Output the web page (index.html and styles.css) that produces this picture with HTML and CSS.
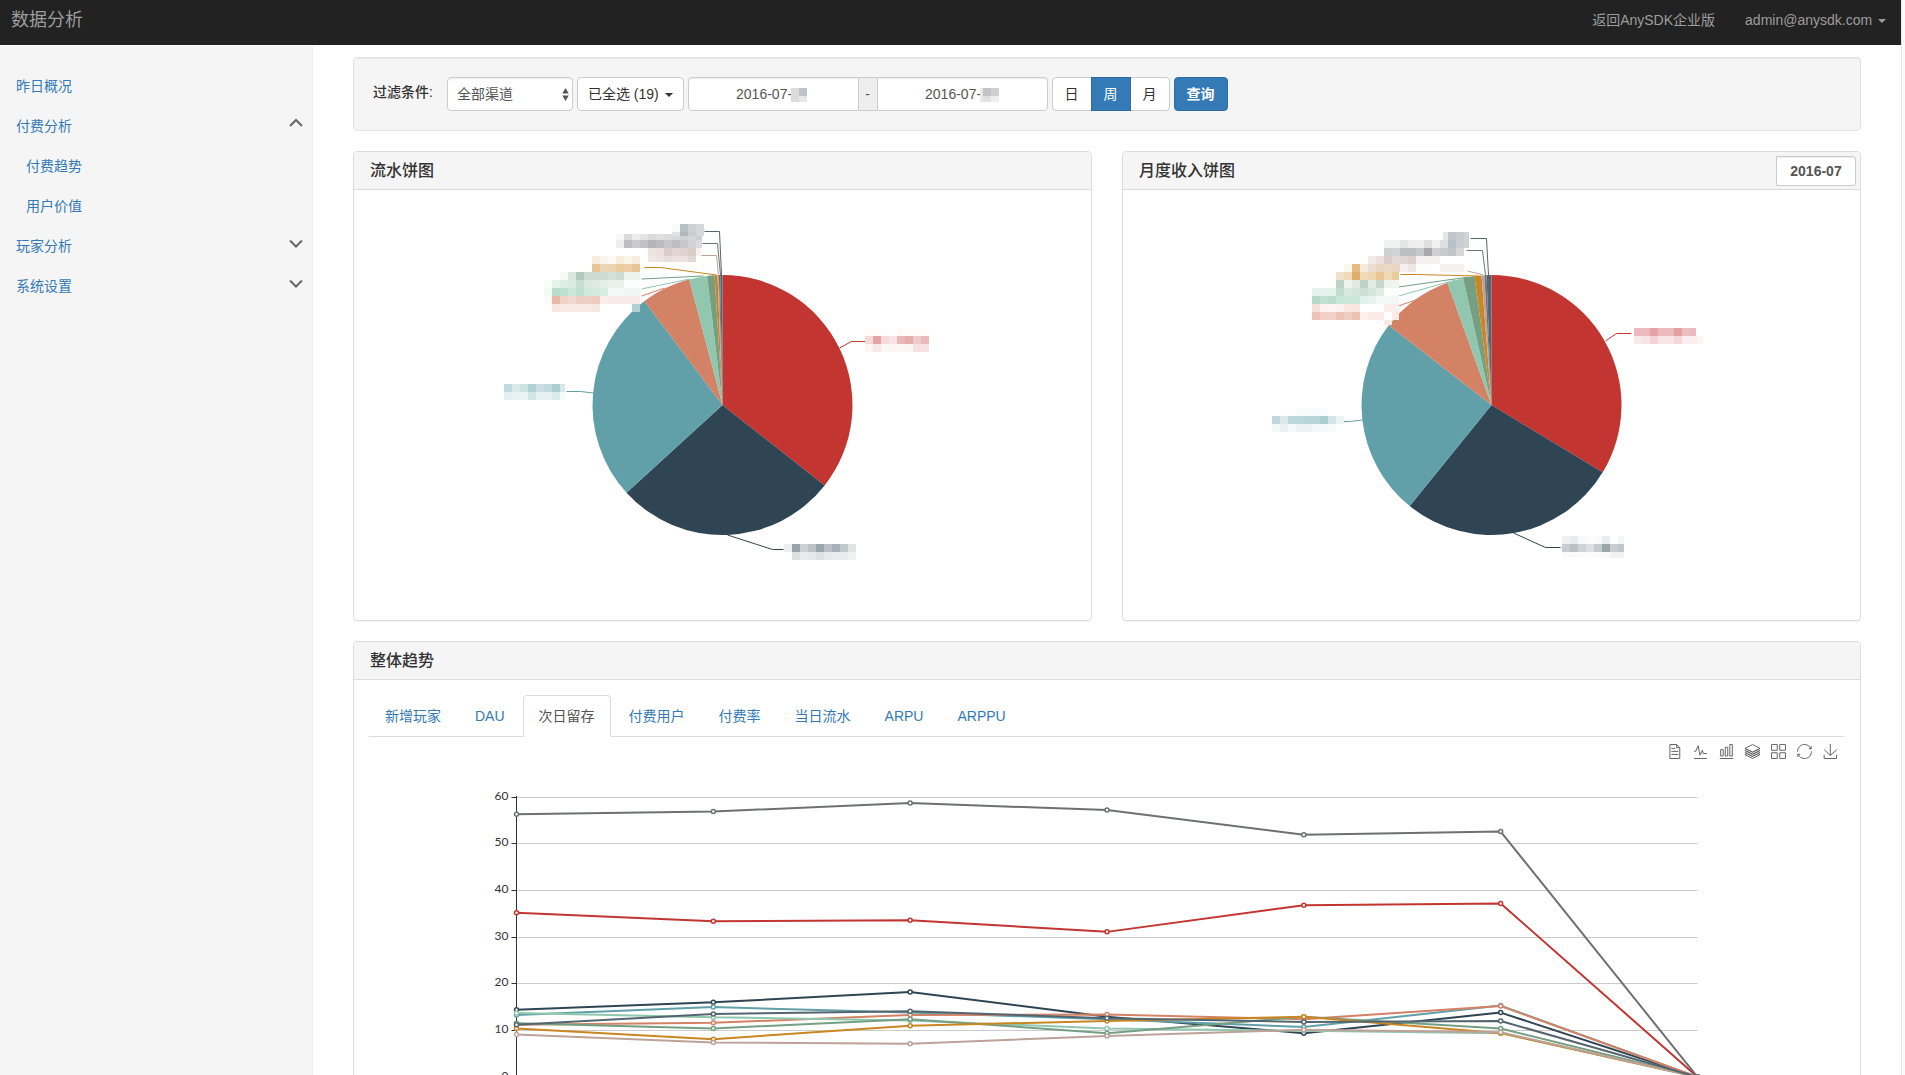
FILE: index.html
```html
<!DOCTYPE html>
<html lang="zh-CN">
<head>
    <meta charset="UTF-8">
    <meta name="viewport" content="width=device-width, initial-scale=1.0">
    <title>数据分析</title>
    <link rel="stylesheet" href="styles.css">
</head>
<body>
    <div class="page">
        <header class="navbar">
            <a class="navbar-brand" href="#">数据分析</a>
            <nav class="navbar-right">
                <a href="#">返回AnySDK企业版</a>
                <a href="#">admin@anysdk.com <span class="caret"></span></a>
            </nav>
        </header>

        <div class="layout">
            <nav class="sidebar">
                <a href="#">昨日概况</a>
                <a href="#">付费分析
                    <svg class="chevron" viewBox="0 0 16 16"><path d="M2 8L8 2L14 8"/></svg>
                </a>
                <a class="sub" href="#">付费趋势</a>
                <a class="sub" href="#">用户价值</a>
                <a href="#">玩家分析
                    <svg class="chevron" viewBox="0 0 16 16"><path d="M2 2.500L8 8.500L14 2.500"/></svg>
                </a>
                <a href="#">系统设置
                    <svg class="chevron" viewBox="0 0 16 16"><path d="M2 2.500L8 8.500L14 2.500"/></svg>
                </a>
            </nav>

            <main class="content">
                <form class="well">
                    <label class="filter-label" for="channel">过滤条件:</label>
                    <div class="select-wrap">
                        <select id="channel" class="form-control">
                            <option>全部渠道</option>
                        </select>
                        <svg class="select-arrows" viewBox="0 0 7 14"><path d="M3.500 0L7 6H0zM3.500 14L0 8H7z"/></svg>
                    </div>
                    <button type="button" class="btn btn-multi">已全选 (19) <span class="caret"></span></button>
                    <div class="date-range">
                        <div class="date-field">
                            <input class="form-control" type="text" value="2016-07-" aria-label="开始日期">
                            <span class="mask mask-start"></span>
                        </div>
                        <span class="addon">-</span>
                        <div class="date-field">
                            <input class="form-control" type="text" value="2016-07-" aria-label="结束日期">
                            <span class="mask mask-end"></span>
                        </div>
                    </div>
                    <div class="btn-group">
                        <button type="button" class="btn">日</button>
                        <button type="button" class="btn btn-primary">周</button>
                        <button type="button" class="btn">月</button>
                    </div>
                    <button type="button" class="btn btn-primary btn-query">查询</button>
                </form>

                <div class="row">
                    <section class="panel">
                        <div class="panel-heading">
                            <h3>流水饼图</h3>
                        </div>
                        <div class="panel-body">
                            <svg id="flow-pie" class="chart"></svg>
                        </div>
                    </section>
                    <section class="panel">
                        <div class="panel-heading">
                            <h3>月度收入饼图</h3>
                            <input class="month-input" type="text" value="2016-07" aria-label="月份">
                        </div>
                        <div class="panel-body">
                            <svg id="month-pie" class="chart"></svg>
                        </div>
                    </section>
                </div>

                <section class="panel">
                    <div class="panel-heading">
                        <h3>整体趋势</h3>
                    </div>
                    <div class="panel-body">
                        <nav class="tabs">
                            <a href="#">新增玩家</a>
                            <a href="#">DAU</a>
                            <a class="active" href="#">次日留存</a>
                            <a href="#">付费用户</a>
                            <a href="#">付费率</a>
                            <a href="#">当日流水</a>
                            <a href="#">ARPU</a>
                            <a href="#">ARPPU</a>
                        </nav>
                        <div class="trend">
                            <svg id="trend-chart" class="chart"></svg>
                            <div class="toolbox">
                                <button type="button" aria-label="数据视图"><svg viewBox="0 0 60 60"><path d="M17.5,17.3H33M45.4,29.5h-28M11.5,2v56H51V14.8L38.4,2H11.5zM38.4,2.2v12.7H51M45.4,41.7h-28"/></svg></button>
                                <button type="button" aria-label="折线图"><svg viewBox="0 0 60 60"><path d="M4.1,28.9h7.1l9.3-22l7.4,38l9.7-19.7l3,12.8h14.9M4.1,58h51.4"/></svg></button>
                                <button type="button" aria-label="柱状图"><svg viewBox="0 0 60 60"><path d="M6.7,22.9h10V48h-10V22.9zM24.9,13h10v35h-10V13zM43.2,2h10v46h-10V2zM3.1,58h53.7"/></svg></button>
                                <button type="button" aria-label="堆叠"><svg viewBox="0 0 60 60"><path d="M8.2,38.4l-8.4,4.1l30.6,15.3L60,42.5l-8.1-4.1l-21.5,11L8.2,38.4zM51.9,30l-8.1,4.2l-13.4,6.9l-13.9-6.9L8.2,30l-8.4,4.2l8.4,4.2l22.2,11l21.5-11l8.1-4.2L51.9,30zM51.9,21.7l-8.1,4.2L35.7,30l-5.3,2.8L24.9,30l-8.4-4.1l-8.3-4.2l-8.4,4.2L8.2,30l8.3,4.2l13.9,6.9l13.4-6.9l8.1-4.2l8.1-4.1L51.9,21.7zM30.4,2.2L-0.2,17.5l8.4,4.1l8.3,4.2l8.4,4.2l5.5,2.7l5.3-2.7l8.1-4.2l8.1-4.2l8.1-4.1L30.4,2.2z"/></svg></button>
                                <button type="button" aria-label="平铺"><svg viewBox="0 0 60 60"><path d="M2.3,2.2h22.8V25H2.3V2.2zM35,2.2h22.8V25H35V2.2zM2.3,35h22.8v22.8H2.3V35zM35,35h22.8v22.8H35V35z"/></svg></button>
                                <button type="button" aria-label="还原"><svg viewBox="0 0 60 60"><path d="M47,18.9h9.8V8.7M56.3,20.1C52.1,9,40.5,0.6,26.8,2.1C12.6,3.7,1.6,16.2,2.1,30.6M13,41.1H3.1v10.2M3.7,39.9c4.2,11.1,15.8,19.5,29.5,18c14.2-1.6,25.2-14.1,24.7-28.5"/></svg></button>
                                <button type="button" aria-label="保存为图片"><svg viewBox="0 0 60 60"><path d="M4.7,22.9L29.3,45.5L54.7,23.4M4.6,43.6L4.6,58L53.8,58L53.8,43.6M29.2,45.1L29.2,0"/></svg></button>
                            </div>
                        </div>
                    </div>
                </section>
            </main>
        </div>
    </div>
    <div class="scroll-gutter"></div>

    <script src="charts.js"></script>
</body>
</html>
```

FILE: styles.css
```css
* {
    box-sizing: border-box;
}
body {
    display: flex;
    height: 100vh;
    margin: 0;
    overflow: hidden;
    font-family: "Liberation Sans", "Noto Sans CJK SC", sans-serif;
    font-size: 14px;
    line-height: 20px;
    color: #333;
    background: #fff;
}
a {
    color: #337ab7;
    text-decoration: none;
}
button, input, select {
    font: inherit;
}
.page {
    flex: 1;
    min-width: 0;
    overflow-y: auto;
    scrollbar-width: none;
}
.scroll-gutter {
    width: 4px;
    background: #fafafa;
    border-left: 1px solid #e7e7e7;
}

/* 顶部导航 */
.navbar {
    display: flex;
    justify-content: space-between;
    height: 45px;
    background: #222;
}
.navbar a {
    color: #9d9d9d;
}
.navbar-brand {
    padding: 10px 11px;
    font-size: 18px;
}
.navbar-right {
    display: flex;
}
.navbar-right a {
    padding: 10px 15px;
}
.caret {
    display: inline-block;
    margin-left: 2px;
    vertical-align: middle;
    border-top: 4px solid;
    border-right: 4px solid transparent;
    border-left: 4px solid transparent;
}

/* 侧边栏 */
.layout {
    display: flex;
    min-height: calc(100vh - 45px);
}
.sidebar {
    flex: 0 0 313px;
    margin-top: 1px;
    padding-top: 20px;
    background: #f5f5f5;
    border-right: 1px solid #eee;
}
.sidebar a {
    display: flex;
    align-items: center;
    justify-content: space-between;
    height: 40px;
    padding: 0 8px 0 16px;
}
.sidebar .sub {
    padding-left: 26px;
}
.chevron {
    width: 16px;
    height: 16px;
    fill: none;
    stroke: #666;
    stroke-width: 2;
}
.content {
    flex: 1;
    min-width: 0;
    padding: 12px 40px 0;
}

/* 过滤条件 */
.well {
    display: flex;
    gap: 4px;
    margin-bottom: 20px;
    padding: 19px;
    background: #f5f5f5;
    border: 1px solid #e3e3e3;
    border-radius: 4px;
    box-shadow: inset 0 1px 1px rgba(0,0,0,0.05);
}
.filter-label {
    padding: 5px 10px 0 0;
    font-weight: 500;
}
.form-control {
    width: 100%;
    height: 34px;
    padding: 6px 9px;
    color: #555;
    background: #fff;
    border: 1px solid #ccc;
    border-radius: 4px;
    box-shadow: inset 0 1px 1px rgba(0,0,0,0.075);
}
.select-wrap {
    position: relative;
    width: 126px;
}
.select-wrap .form-control {
    appearance: none;
}
.select-arrows {
    position: absolute;
    right: 4px;
    top: 11px;
    width: 7px;
    height: 13px;
    fill: #555;
}
.btn {
    height: 34px;
    padding: 6px 12px;
    color: #333;
    background: #fff;
    border: 1px solid #ccc;
    border-radius: 4px;
}
.btn-primary {
    color: #fff;
    background: #337ab7;
    border-color: #2e6da4;
}
.btn-multi {
    padding: 6px 10px;
}
.btn-query {
    font-weight: 700;
}
.date-range {
    display: flex;
    width: 360px;
}
.date-field {
    position: relative;
    flex: 1;
}
.date-field .form-control {
    padding-right: 27px;
    text-align: center;
}
.date-field:first-child .form-control {
    border-radius: 4px 0 0 4px;
}
.date-field:last-child .form-control {
    border-radius: 0 4px 4px 0;
}
.addon {
    width: 18px;
    padding: 6px 0;
    text-align: center;
    color: #555;
    background: #eee;
    border: solid #ccc;
    border-width: 1px 0;
}
/* 日期打码 */
.mask {
    position: absolute;
    top: 11px;
    left: calc(50% + 18px);
    width: 16px;
    height: 14px;
}
.mask-start {
    background: linear-gradient(#bfc2cb 8px, #e6e6ec 8px) right / 8px 100% no-repeat #dcdcdc;
}
.mask-end {
    width: 19px;
    background:
        linear-gradient(#cfcfd2 8px, #efefee 8px) right / 8px 100% no-repeat,
        linear-gradient(#c2c3c6 8px, #dfe1e3 8px) 3px 0 / 8px 100% no-repeat #ede8e4;
}
.btn-group {
    display: flex;
}
.btn-group .btn {
    border-radius: 0;
}
.btn-group .btn + .btn {
    margin-left: -1px;
}
.btn-group .btn:first-child {
    border-radius: 4px 0 0 4px;
}
.btn-group .btn:last-child {
    border-radius: 0 4px 4px 0;
}
.btn-group .btn-primary {
    z-index: 1;
}

/* 面板 */
.row {
    display: grid;
    grid-template-columns: 1fr 1fr;
    gap: 30px;
}
.panel {
    min-width: 0;
    margin-bottom: 20px;
    border: 1px solid #ddd;
    border-radius: 4px;
    box-shadow: 0 1px 1px rgba(0,0,0,0.05);
}
.panel-heading {
    display: flex;
    align-items: center;
    justify-content: space-between;
    height: 38px;
    padding: 0 4px 0 16px;
    background: #f5f5f5;
    border-bottom: 1px solid #ddd;
    border-radius: 3px 3px 0 0;
}
.panel-heading h3 {
    margin: 0;
    padding-top: 1px;
    font-size: 16px;
    font-weight: 500;
}
.month-input {
    width: 80px;
    height: 30px;
    padding: 1px 0 0;
    font-weight: 700;
    text-align: center;
    color: #555;
    background: #fff;
    border: 1px solid #ccc;
    border-radius: 0 3px 3px 0;
    box-shadow: inset 0 1px 1px rgba(0,0,0,0.075);
}
.panel-body {
    padding: 15px;
}

/* 标签页 */
.tabs {
    display: flex;
    gap: 2px;
    border-bottom: 1px solid #ddd;
}
.tabs a {
    margin-bottom: -1px;
    padding: 10px 15px;
    border: 1px solid transparent;
    border-radius: 4px 4px 0 0;
}
.tabs .active {
    color: #555;
    background: #fff;
    border-color: #ddd #ddd #fff;
}

/* 图表 */
.chart {
    display: block;
    width: 100%;
    height: 400px;
}
.chart .leader {
    fill: none;
    stroke-width: 1;
}
.chart .grid-line {
    stroke: #ccc;
}
.chart .axis {
    stroke: #333;
}
.chart .axis-label {
    font-family: Lato, sans-serif;
    font-size: 12px;
    fill: #333;
    text-anchor: end;
}
.chart .series {
    fill: none;
    stroke-width: 2;
    stroke-linejoin: bevel;
}
.chart .dot {
    fill: #fff;
    stroke-width: 1.5;
}
.trend {
    position: relative;
}
.toolbox {
    position: absolute;
    top: 7px;
    right: 7px;
    display: flex;
    gap: 11px;
}
.toolbox button {
    width: 15px;
    height: 15px;
    padding: 0;
    background: none;
    border: 0;
    cursor: pointer;
}
.toolbox svg {
    display: block;
    overflow: visible;
    fill: none;
    stroke: #666;
}
.toolbox path {
    vector-effect: non-scaling-stroke;
}
```

FILE: charts.js
```js
const COLORS = ['#c23531', '#2f4554', '#61a0a8', '#d48265', '#91c7ae', '#749f83', '#ca8622', '#bda29a', '#6e7074', '#546570'];

function add(parent, tag, attrs, text) {
    const el = document.createElementNS('http://www.w3.org/2000/svg', tag);
    for (const key in attrs) el.setAttribute(key, attrs[key]);
    if (text !== undefined) el.textContent = text;
    parent.appendChild(el);
    return el;
}

// ends: 每个扇区的结束角度; leaders: 引导线; masks: 打码标签 [x, y, 高度, 颜色(/宽度)...]
function drawPie(id, ends, leaders, masks) {
    const svg = document.getElementById(id);
    const r = 130;
    const g = add(svg, 'g', { transform: `translate(${svg.clientWidth / 2} 200)` });
    let start = 0;
    ends.forEach((end, i) => {
        const a = start * Math.PI / 180;
        const b = end * Math.PI / 180;
        const large = end - start > 180 ? 1 : 0;
        add(g, 'path', {
            fill: COLORS[i],
            d: `M0 0L${r * Math.sin(a)} ${-r * Math.cos(a)}A${r} ${r} 0 ${large} 1 ${r * Math.sin(b)} ${-r * Math.cos(b)}Z`
        });
        start = end;
    });
    leaders.forEach((points, i) => add(g, 'polyline', { class: 'leader', points, stroke: COLORS[i] }));
    masks.forEach(([x, y, h, cells]) => {
        cells.split(' ').forEach((cell, i) => {
            const [c, width = 8] = cell.split('/');
            if (c !== '-') {
                add(g, 'rect', { x: x + i * 8, y, width, height: h, fill: '#' + c, 'shape-rendering': 'crispEdges' });
            }
        });
    });
}

drawPie('flow-pie',
    [128.2, 227.6, 323.1, 345.2, 353.2, 356.5, 357.8, 358.4, 359, 360],
    [
        '117,-57 129,-63.5 144,-63.5',
        '5,130 50,144.5 61,144.5',
        '-129,-12 -142,-13.5 -156,-13.5',
        '-58,-117 -81,-109',
        '-33,-126 -81,-116',
        '-19,-129 -81,-126',
        '-6,-130 -62,-137.5 -78,-137.5',
        '-4,-130 -6,-149.5 -21,-149.5',
        '-2,-130 -5,-161.5 -20,-161.5',
        '-1,-130 -3,-173.5 -18,-173.5'
    ],
    [
        [-51, -181, 8, 'f8f9f9 b6bfc3 ccd0d4 d3d8db'],
        [-51, -173, 4, 'dfe3e5 b1b6ba c9cdd1 d3d8db'],
        [-107, -171, 6, 'f8f8f8 dadada ececec e5e5e5 d9d9d9 e0e0e0 dcdcdd'],
        [-51, -169, 4, 'd6d7d9 d0d1d3 d3d5d7 c9cdd0/6'],
        [-107, -165, 8, 'eeeeef bdbdbf cbcbcd c2c2c4 b5b5b8 bcbcbf c6c6c8 bdbdc0 c8c8cb d3d3d5 dcdcde/6'],
        [-75, -157, 8, 'ede4e2 eae0de dacdc9 e1d6d3 dfd3cf d9cbc6 f5f1f0/5'],
        [-75, -149, 6, 'efe7e6 ece4e2 e9dedc ebe1df ebe0de e3d8d5'],
        [-131, -149, 8, 'f8ecdc fbf4ec fdf8f1 f8ecdc fbf4ea f8ecdc'],
        [-131, -141, 8, 'e6c696 edd6b6 ecd4b3 e9cc9f eacfa8 e6c696'],
        [-163, -133, 8, 'f6f9f7 d9e6dd b2cabc cddcd3 cddcd3 cddcd3 d3e2d9 ccdbd1 edf3ef edf3ef'],
        [-179, -125, 8, 'f8fcfa e4f3ec dcefe6 d8eae1 c6ddd1 d8e9e0 deeae3 e5eee9 eaf0ec eaf0ec fcfdfd fcfdfd'],
        [-179, -117, 8, 'f2f8f5 b8ddcc bfe0d1 cde6db bfdfd0 d2e8df d3e9df d8ebe3 f1f8f5 f1f8f5 eff6f3 eff6f3'],
        [-179, -109, 8, 'fcf9f8 e7b9a8 f1d2c8 f2d7cf efcdc2 efcfc5 eecabf faeeea f8ebe7 f8ebe7 f8ebe7 f8ebe7'],
        [-171, -101, 8, 'f7e6e2 f8e9e5 f8e9e5 f8e9e5 f8e9e5 f7e6e2 - - - ffffff afcfd2'],
        [142, -77, 8, 'fefdfd fefcfb fefdfd ffffff fdfaf9 fefcfb fefcfb fefcfb'],
        [142, -69, 8, 'f4d9d9 e4a3a4 f4dadb f7e4e4 ebb8ba e6abad efcacb ebb9ba'],
        [142, -61, 8, 'fbf4f4 f8e8e7 fcf6f5 fbf4f3 fcf7f6 fcf5f4 f7e0e1 f7e0e1'],
        [61, 139, 8, 'eceeef 98a4aa ccd0d4 bbc1c8 9ba6ac bac0c6 a7b0b8 c0c8cb e1e4e6'],
        [69, 147, 8, 'dcdfe2 e8eaec e5e7ea dde0e4 e7e9ec ebecee e8eaec eff0f2'],
        [-219, -21, 8, 'c2dade dbe9ea cde2e4 b1d2d5 cbdfe2 c2d9dd acced2 d8e7e9/5'],
        [-219, -13, 8, 'e3eff0 e9f1f3 ebf4f4 d2e5e7 e7f0f1 e6eff1 dbebeb f4f9f9/5']
    ]
);

drawPie('month-pie',
    [121.2, 219, 307.8, 340.2, 347.4, 352.5, 355.6, 356.9, 357.8, 360],
    [
        '114,-64 125,-71.5 140,-71.5',
        '22,128 54,142.5 69,142.5',
        '-129,15 -142,16.5 -148,16.5',
        '-76,-105 -93,-99',
        '-36,-125 -93,-109',
        '-23,-128 -93,-118',
        '-13,-129 -75,-130.5 -91,-130.5',
        '-8,-130 -24,-134',
        '-6,-130 -9,-154.5 -25,-154.5',
        '-3,-130 -5,-166.5 -21,-166.5'
    ],
    [
        [-44, -173, 8, 'c1c6cb c8ccd1 cfd3d6/5'],
        [-49, -173, 8, 'e4e7e7/5'],
        [-108, -165, 8, 'eff0f0 eff0f0 e5e5e6 eeeeef efefef dfdfe0 f0f0f0 dde0e3 bac0c7 c9cdd1 cfd3d6/5'],
        [-108, -157, 8, 'cfd0d2 d1d2d4 bcbdbf bcbdbf c8c8ca a7a8ab cfcfd0 c9c9cc c2c3c7 d7d7d8'],
        [-124, -149, 8, 'f0ebea eae1df d9cbc8 e2d9d7 e0d6d4 dccecb f5f1f1 f5f1f1 f5f1f1'],
        [-148, -141, 8, 'fcf6ed e4bb80 f6ead9 ebddd2 e9d6c1 ead8c4 e6d5c2 f4efee ece5e4 fdfdfd fdfdfd ffffff f5f1f1 f5f1f1 f5f1f1'],
        [-156, -133, 8, 'f0e1ca f0dab7 dbae6e f1dab6 efd6b2 e8c795 f0d8b2 e8cb9a/7'],
        [-156, -125, 8, 'bed2c6 edf3ef dfeae3 bed2c6 e1ebe4 c6d7cc edf3ef eff4f1/7'],
        [-180, -117, 8, 'e3f2ec e4f3ed e5f3ed c4dbcd d9e9e0 d3e4da cbdfd3 d7e6dc e2ece6 ffffff fcfdfd/7'],
        [-180, -109, 8, 'b4d9c7 c1e0d2 bcddcc c9e5d9 cbe6da cbe6da e1f1eb e6f3ee f1f8f5 f2f8f6 f0f7f4/7'],
        [-180, -101, 8, 'f7e0da fcf3f0 fcf5f3 fbf2ef fae7e2 f7e6e1 ffffff ffffff ffffff faedea fbeeea/7'],
        [-180, -93, 8, 'ecc3b6 f1d0c6 f2d2c8 ecc4b7 efccc1 edc2b5 faf0ee faebe7 faebe7 ffffff faeae5/7'],
        [-108, -85, 5, 'fbeae5'],
        [142, -77, 8, 'ebbabc ebbabc e5a3a5 ebbabc ebbabc e3a0a1 ecc0c2 e9b9bb/6'],
        [142, -69, 8, 'f9eaea f7e5e5 f2d2d4 f8e6e6 f8e6e6 f4d8d8 fbeeee fbeeee fdf5f5/5'],
        [70, 131, 8, 'f1f1f3 e9ebed f8f9f9 fbfbfb fafafa ebecee ffffff f4f5f7/6'],
        [70, 139, 8, 'c8ccd1 b9c0c8 cfd3d7 dde0e3 c6ccd0 9aa5ab c9cdd2 c0c5cb/6'],
        [70, 147, 6, 'fafafa fbfbfb fcfcfc fcfcfc fbfbfb fafafa f1f1f3 f1f1f3/6'],
        [-220, 3, 8, 'ffffff fefefe fefefe fafcfc fafcfc f8fbfb fafcfc'],
        [-220, 11, 8, 'bfd8dc dae8ea bcd6d9 bcd6d9 b9d4d8 b9d4d8 adced1 d3e5e7 e9f3f4'],
        [-220, 19, 8, 'f2f7f8 e9f1f3 f5f9f9 eaf2f3 ebf3f4 f3f8f9 f3fafa f6fafa']
    ]
);

// 次日留存折线图
const SERIES = [
    [35.2, 33.4, 33.6, 31.1, 36.8, 37.2, 0],
    [14.4, 16, 18.2, 12.9, 9.4, 13.8, 0],
    [13.3, 15, 13.8, 12.4, 10.7, 15.3, 0],
    [11.2, 11.6, 13.3, 13.4, 12.4, 15.2, 0],
    [13.7, 12.8, 12.1, 10.4, 9.9, 9.4, 0],
    [11.5, 10.4, 12.4, 9.4, 12.9, 10.4, 0],
    [10.4, 8.1, 11, 12, 12.9, 9.4, 0],
    [9.1, 7.4, 7.1, 8.8, 10.1, 9.6, 0],
    [56.3, 56.9, 58.7, 57.2, 51.9, 52.6, 0],
    [11.2, 13.5, 14.1, 12.6, 11.8, 12, 0]
];

function drawTrend() {
    const svg = document.getElementById('trend-chart');
    const left = Math.round(svg.clientWidth * 0.1) - 0.5;
    const right = svg.clientWidth - left;
    const x = i => left + (right - left) * i / 6;
    const y = v => 340 - v * 280 / 60;

    for (let v = 0; v <= 60; v += 10) {
        const ly = Math.floor(y(v)) + 0.5;
        add(svg, 'line', { class: v ? 'grid-line' : 'axis', x1: left, x2: right, y1: ly, y2: ly });
        add(svg, 'line', { class: 'axis', x1: left - 5, x2: left, y1: ly, y2: ly });
        add(svg, 'text', { class: 'axis-label', x: left - 8, y: Math.floor(ly) + 3 }, v);
    }
    add(svg, 'line', { class: 'axis', x1: left, x2: left, y1: 59, y2: 340 });

    SERIES.forEach((values, s) => {
        add(svg, 'polyline', { class: 'series', stroke: COLORS[s], points: values.map((v, i) => `${x(i)},${y(v)}`).join(' ') });
        values.forEach((v, i) => add(svg, 'circle', { class: 'dot', stroke: COLORS[s], cx: x(i), cy: y(v), r: 2 }));
    });
}

drawTrend();
```
